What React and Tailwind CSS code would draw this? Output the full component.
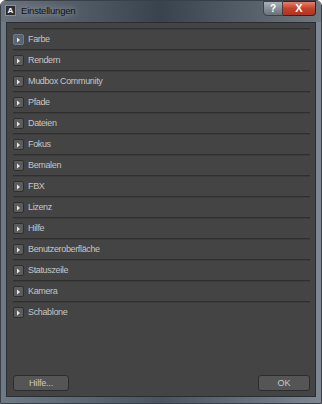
import React from 'react';

const sections = [
  'Farbe',
  'Rendern',
  'Mudbox Community',
  'Pfade',
  'Dateien',
  'Fokus',
  'Bemalen',
  'FBX',
  'Lizenz',
  'Hilfe',
  'Benutzeroberfläche',
  'Statuszeile',
  'Kamera',
  'Schablone',
];

function ExpandButton({ active }) {
  return (
    <div
      className={`w-[11px] h-[11px] rounded-[2px] border flex items-center justify-center ${
        active ? 'border-[#6c7c8c] bg-[#5a6470]' : 'border-[#2e2e2e] bg-[#5c5c5c]'
      }`}
    >
      <svg width="5" height="6" viewBox="0 0 5 6">
        <path d="M1 0.5 L4 3 L1 5.5 Z" fill="#e8e8e8" />
      </svg>
    </div>
  );
}

export default function App() {
  return (
    <div
      className="w-[322px] h-[404px] flex flex-col border border-[#3a4048] rounded-t-[6px] overflow-hidden"
      style={{ fontFamily: '"Liberation Sans", Arial, sans-serif' }}
    >
      {/* Frame background */}
      <div className="flex-1 flex flex-col bg-gradient-to-r from-[#6e7a86] via-[#4a5461] to-[#7d8792]">
        {/* Title bar */}
        <div className="h-[21px] flex items-start shrink-0 bg-gradient-to-r from-[#6a737c] via-[#39434e] to-[#6f7880]">
          <div className="flex items-center gap-[5px] pl-[4px] pt-[4px] flex-1">
            <div className="w-[11px] h-[11px] bg-[#2a2d31] border border-[#8a9096] flex items-end justify-center">
              <span className="text-[8px] leading-none text-white font-bold">A</span>
            </div>
            <span className="text-[9.5px] leading-none tracking-[-0.2px] text-[#111] [text-shadow:0_0_6px_rgba(255,255,255,0.6)]">
              Einstellungen
            </span>
          </div>
          <div className="flex mr-[5px]">
            <div className="w-[20px] h-[15px] border border-[#3c4148] rounded-bl-[4px] bg-gradient-to-b from-[#a9b0b7] to-[#6a7077] flex items-center justify-center">
              <span className="text-[10px] font-bold leading-none text-white">?</span>
            </div>
            <div className="w-[33px] h-[15px] border border-l-0 border-[#4a1a14] rounded-br-[4px] bg-gradient-to-b from-[#e4806c] via-[#c3402b] to-[#b5321e] flex items-center justify-center">
              <span className="text-[11px] font-bold leading-none text-white">X</span>
            </div>
          </div>
        </div>

        {/* Client area */}
        <div className="flex-1 ml-[5px] mr-[5px] mb-[6px] border border-[#2a2e33] flex flex-col bg-[#444444]">
          <div className="flex-1 pl-[6px] pr-[5px] pt-[5px] flex flex-col">
            {sections.map((name, i) => (
              <div key={name} className="flex flex-col">
                <div className="h-[1px] bg-[#2f2f2f]" />
                <div className="h-[1px] bg-[#3c3c3c]" />
                <div className="h-[19px] flex items-center gap-[4px]">
                  <ExpandButton active={i === 0} />
                  <span className="text-[9px] leading-none tracking-[-0.35px] text-[#c4c4c4]">{name}</span>
                </div>
              </div>
            ))}
          </div>
          <div className="flex justify-between items-center pl-[6px] pr-[5px] pb-[5px]">
            <button className="w-[56px] h-[16px] rounded-[3px] border border-[#2c2c2c] bg-[#555555] text-[9px] leading-none tracking-[-0.2px] text-[#c8c8c8]">
              Hilfe...
            </button>
            <button className="w-[52px] h-[16px] rounded-[3px] border border-[#2c2c2c] bg-[#555555] text-[9px] leading-none text-[#c8c8c8]">
              OK
            </button>
          </div>
        </div>
      </div>
    </div>
  );
}
